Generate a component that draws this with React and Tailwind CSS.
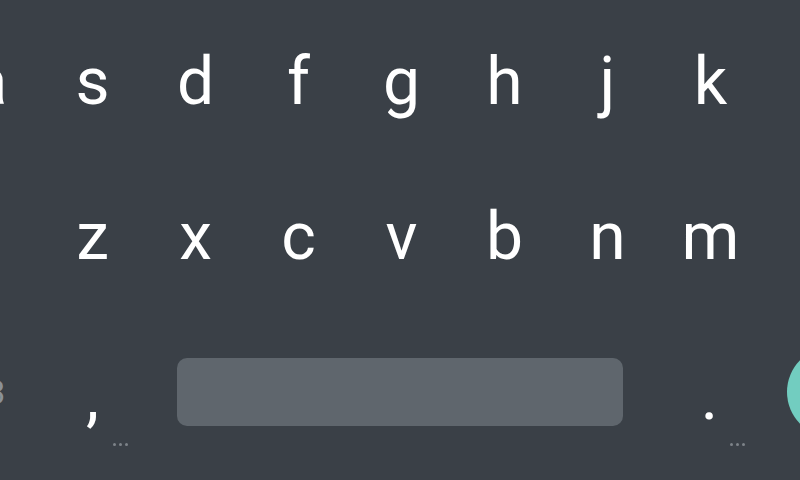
import React from "react";

const row1 = ["a", "s", "d", "f", "g", "h", "j", "k", "l"];
const row2 = ["", "z", "x", "c", "v", "b", "n", "m", ""];

const Key = ({ label }) => (
  <div className="w-[103px] shrink-0 flex justify-center items-center text-[66px] leading-none text-white">
    {label}
  </div>
);

const Dots = () => (
  <div className="absolute left-[72px] top-[84px] flex gap-[3px]">
    <span className="w-[3px] h-[3px] rounded-full bg-[#7d8389]" />
    <span className="w-[3px] h-[3px] rounded-full bg-[#7d8389]" />
    <span className="w-[3px] h-[3px] rounded-full bg-[#7d8389]" />
  </div>
);

export default function App() {
  return (
    <div
      className="w-[800px] h-[480px] overflow-hidden bg-[#3a4047] flex flex-col"
      style={{ fontFamily: "Roboto, 'Noto Sans', sans-serif" }}
    >
      <div className="h-[164px] flex items-center ml-[-62px]">
        {row1.map((k) => (
          <Key key={k} label={k} />
        ))}
      </div>

      <div className="h-[146px] flex items-center ml-[-62px] relative">
        <div className="absolute left-[-40px] top-[12px] w-[60px] h-[116px] rounded-[6px] bg-[#3d444b]" />
        {row2.map((k, i) => (
          <Key key={i} label={k} />
        ))}
      </div>

      <div className="flex-1 flex items-center pb-[6px]">
        <div className="w-[41px] shrink-0 flex">
          <span className="ml-[-68px] whitespace-nowrap text-[34px] leading-none text-[#8b9197]">
            ?123
          </span>
        </div>
        <div className="w-[103px] shrink-0 relative flex justify-center">
          <span className="relative top-[5px] text-[66px] leading-none text-white">,</span>
          <Dots />
        </div>
        <div className="ml-[33px] w-[446px] h-[68px] shrink-0 rounded-[10px] bg-[#5f666d]" />
        <div className="ml-[35px] w-[103px] shrink-0 relative flex justify-center">
          <span className="relative top-[5px] text-[66px] leading-none text-white">.</span>
          <Dots />
        </div>
        <div className="ml-[26px] w-[90px] h-[90px] shrink-0 rounded-full bg-[#72cdc0]" />
      </div>
    </div>
  );
}
